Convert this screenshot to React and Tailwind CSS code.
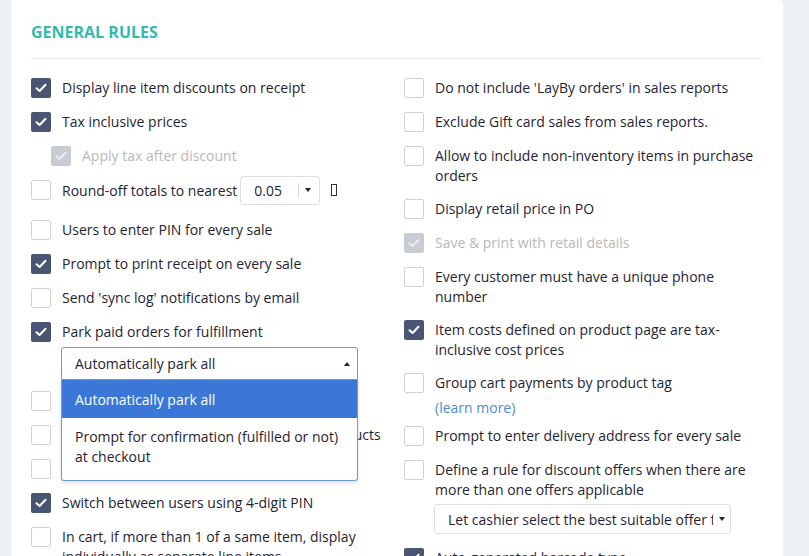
import React from 'react';

const Check = ({ color = '#ffffff' }) => (
  <svg width="12" height="10" viewBox="0 0 12 10" fill="none">
    <path d="M1.5 5.2 L4.6 8 L10.5 1.8" stroke={color} strokeWidth="2" strokeLinecap="round" strokeLinejoin="round" />
  </svg>
);

const Box = ({ checked, disabled }) => {
  if (disabled) {
    return (
      <span className="w-5 h-5 shrink-0 rounded-[2px] bg-[#c9ccd4] flex items-center justify-center">
        <Check color="#e9ebef" />
      </span>
    );
  }
  if (checked) {
    return (
      <span className="w-5 h-5 shrink-0 rounded-[2px] bg-[#4a5473] flex items-center justify-center">
        <Check />
      </span>
    );
  }
  return <span className="w-5 h-5 shrink-0 rounded-[2px] border border-[#d4d1cd] bg-white" />;
};

const Row = ({ checked, disabled, children, className = 'mb-[14px]' }) => (
  <div className={`flex items-start gap-[11px] ${className}`}>
    <Box checked={checked} disabled={disabled} />
    <div className={`leading-[19.5px] ${disabled ? 'text-[#b9b9b9]' : 'text-[#1f2433]'}`}>{children}</div>
  </div>
);

const Caret = ({ up }) => (
  <span className={`w-0 h-0 border-x-[3.5px] border-x-transparent ${up ? 'border-b-[4px] border-b-[#222]' : 'border-t-[4px] border-t-[#222]'}`} />
);

export default function App() {
  return (
    <div className="h-[556px] overflow-hidden bg-[#edf0f5] pl-[11px] pr-[26px] text-[14px]" style={{ fontFamily: '"Open Sans", "Liberation Sans", sans-serif' }}>
      <div className="bg-white rounded-tr-md h-full px-5 pt-[20px]">
        <h2 className="text-[16px] font-bold text-[#33b9b0] leading-[24px]">GENERAL RULES</h2>
        <div className="border-t border-[#e8e9eb] mt-[14px] mb-[19px]" />

        <div className="grid grid-cols-2 gap-x-[14px]">
          {/* left column */}
          <div>
            <Row checked>Display line item discounts on receipt</Row>
            <Row checked>Tax inclusive prices</Row>
            <div className="pl-5">
              <Row disabled>Apply tax after discount</Row>
            </div>
            <div className="flex items-center gap-[11px] mb-[20px]">
              <Box />
              <span className="text-[#1f2433] leading-[19px]">Round-off totals to nearest</span>
              <div className="-my-[4.5px] -ml-2 w-[80px] h-[29px] border border-[#dcdfe3] rounded-[3px] flex items-center pl-[13px] pr-[8px]">
                <span className="text-[#1f2433] flex-1">0.05</span>
                <span className="w-px h-[15px] bg-[#d6d9dd] mr-[6px]" />
                <Caret />
              </div>
              <span className="w-[6px] h-[12px] border border-[#333]" />
            </div>
            <Row>Users to enter PIN for every sale</Row>
            <Row checked>Prompt to print receipt on every sale</Row>
            <Row>Send 'sync log' notifications by email</Row>
            <Row checked className="mb-[5px]">Park paid orders for fulfillment</Row>
            <div className="relative ml-[30px] w-[297px] mb-[11px]">
              <div className="h-[33px] border border-[#6b9bd6] rounded-t-[3px] flex items-center pl-[13px] pr-[7px] text-[#1f2433]">
                <span className="flex-1">Automatically park all</span>
                <Caret up />
              </div>
              <div className="absolute left-0 top-full w-full z-10 bg-white border border-t-0 border-[#6b9bd6] rounded-b-[3px] shadow-[0_2px_4px_rgba(0,0,0,0.12)]">
                <div className="bg-[#3a77d6] text-white h-[38px] flex items-center px-[13px]">Automatically park all</div>
                <div className="px-[13px] pt-[9px] pb-[13px] leading-[20px] text-[#1f2433]">Prompt for confirmation (fulfilled or not) at checkout</div>
              </div>
            </div>
            <Row>Allow sale of items with zero stock</Row>
            <Row>Allow price edits on bundled composite products</Row>
            <Row>Show supplier code on receipt</Row>
            <Row checked>Switch between users using 4-digit PIN</Row>
            <Row>In cart, if more than 1 of a same item, display individually as separate line items</Row>
          </div>

          {/* right column */}
          <div>
            <Row>Do not include 'LayBy orders' in sales reports</Row>
            <Row>Exclude Gift card sales from sales reports.</Row>
            <Row>Allow to include non-inventory items in purchase orders</Row>
            <Row>Display retail price in PO</Row>
            <Row disabled>Save &amp; print with retail details</Row>
            <Row>Every customer must have a unique phone number</Row>
            <Row checked>Item costs defined on product page are tax-inclusive cost prices</Row>
            <Row className="mb-[9.5px]">
              <div>Group cart payments by product tag</div>
              <div className="mt-[5px] leading-[19px] text-[#4d8ad6]">(learn more)</div>
            </Row>
            <Row>Prompt to enter delivery address for every sale</Row>
            <Row className="mb-[5px]">Define a rule for discount offers when there are more than one offers applicable</Row>
            <div className="ml-[30px] w-[297px] h-[30px] border border-[#dcdfe3] rounded-[3px] flex items-center pl-[13px] pr-[5px] mb-[14px]">
              <span className="flex-1 overflow-hidden whitespace-nowrap text-[#1f2433] mr-[6px]">Let cashier select the best suitable offer for customer</span>
              <Caret />
            </div>
            <Row checked>Auto-generated barcode type</Row>
          </div>
        </div>
      </div>
    </div>
  );
}
